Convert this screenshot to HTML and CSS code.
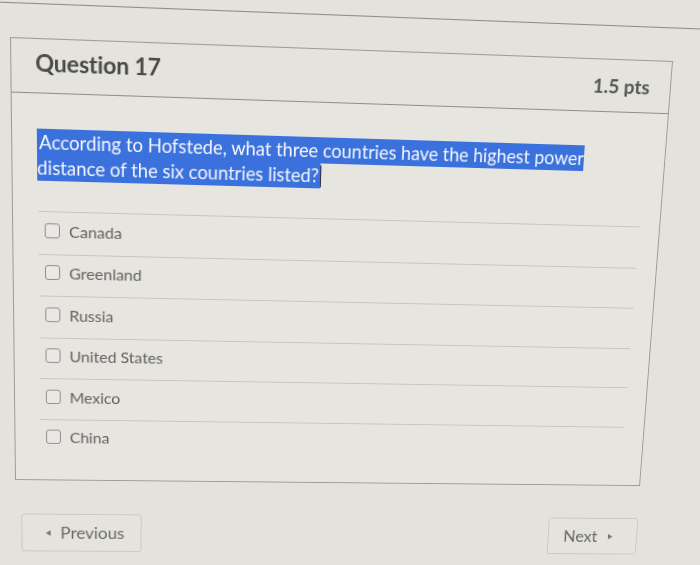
FILE: index.html
```html
<!DOCTYPE html>
<html lang="en">
<head>
<meta charset="utf-8">
<title>Question 17</title>
<link rel="stylesheet" href="styles.css">
</head>
<body>
<div class="page">
  <div class="topline"></div>
  <div class="card">
    <div class="card-header">
      <h2 class="q-title">Question 17</h2>
      <span class="q-points">1.5 pts</span>
    </div>
    <div class="card-body">
      <p class="q-text"><span class="sel">According to Hofstede, what three countries have the highest power distance of the six countries listed?</span><span class="caret"></span></p>
      <div class="answers">
        <label class="answer"><span class="box"></span><span class="a-text">Canada</span></label>
        <label class="answer"><span class="box"></span><span class="a-text">Greenland</span></label>
        <label class="answer"><span class="box"></span><span class="a-text">Russia</span></label>
        <label class="answer"><span class="box"></span><span class="a-text">United States</span></label>
        <label class="answer"><span class="box"></span><span class="a-text">Mexico</span></label>
        <label class="answer"><span class="box"></span><span class="a-text">China</span></label>
      </div>
    </div>
  </div>
  <div class="nav">
    <button class="btn btn-prev"><span class="tri tri-left"></span>Previous</button>
    <button class="btn btn-next">Next<span class="tri tri-right"></span></button>
  </div>
</div>
</body>
</html>
```

FILE: styles.css
```css
html, body {
  margin: 0;
  padding: 0;
  background: #e3e2dc;
  overflow: hidden;
}

body {
  width: 700px;
  height: 565px;
  font-family: Lato, "Noto Sans", sans-serif;
}

.page {
  width: 700px;
  height: 565px;
  padding-top: 4px;
  box-sizing: border-box;
  transform-origin: 0 0;
  transform: matrix3d(1.05299, 0.040433, 0, 0.000063194,
                      0.013407, 1.067312, 0, 0.00014206,
                      0, 0, 1, 0,
                      -0.9671, -2.677, 0, 1);
}

.topline {
  border-top: 1px solid #8c8b87;
  width: 760px;
  margin-left: -30px;
}

.card {
  margin-top: 32px;
  margin-left: 10px;
  width: 660px;
  height: 446px;
  box-sizing: border-box;
  border: 1px solid #9c9b97;
  background: #e6e5e0;
}

.card-header {
  height: 52px;
  box-sizing: border-box;
  border-bottom: 1px solid #8f8e8a;
  background: #e4e3dd;
  display: flex;
  align-items: center;
  justify-content: space-between;
  padding: 0 21px 0 23px;
}

.q-title {
  margin: -6px 0 0 0;
  font-size: 22.5px;
  font-weight: 700;
  color: #4a4a4a;
  letter-spacing: -0.2px;
}

.q-points {
  font-size: 19.5px;
  font-weight: 700;
  color: #555553;
  margin-top: -1px;
}

.card-body {
  padding: 35px 21px 0 25px;
}

.q-text {
  margin: 0 0 30px -1px;
  max-width: 565px;
  font-size: 18.3px;
  line-height: 25px;
  color: #ffffff;
}

.sel {
  background: #3b71dc;
  padding: 2px 1px 2px 2px;
  color: #f5f7fc;
}

.caret {
  display: inline-block;
  width: 1px;
  height: 22px;
  background: #2a2f3a;
  vertical-align: -5px;
}

.answers {
  display: flex;
  flex-direction: column;
}

.answer {
  height: 42.5px;
  box-sizing: border-box;
  border-top: 1px solid #c6c5c0;
  display: flex;
  align-items: center;
  padding: 0 0 5px 6px;
  font-size: 16px;
  color: #626261;
}

.box {
  width: 15px;
  height: 15px;
  box-sizing: border-box;
  border: 1.5px solid #8e8d8a;
  border-radius: 3px;
  background: #e9e8e4;
  margin-right: 9px;
  flex: none;
}

.nav {
  margin-top: 36px;
  display: flex;
  justify-content: space-between;
  padding: 0 29px 0 16px;
}

.btn {
  height: 41px;
  box-sizing: border-box;
  border: 1px solid #c9c8c3;
  border-radius: 3px;
  background: #e4e3de;
  font-family: Lato, "Noto Sans", sans-serif;
  font-size: 17.6px;
  color: #6a6a68;
  display: flex;
  align-items: center;
}

.btn-prev {
  width: 124px;
  padding: 0 0 0 24px;
}

.btn-next {
  width: 98px;
  padding: 0 0 0 16px;
}

.tri {
  display: inline-block;
  width: 0;
  height: 0;
  border-top: 3.5px solid transparent;
  border-bottom: 3.5px solid transparent;
}

.tri-left {
  border-right: 5px solid #777775;
  margin-right: 10px;
}

.tri-right {
  border-left: 5px solid #777775;
  margin-left: 12px;
}
```
